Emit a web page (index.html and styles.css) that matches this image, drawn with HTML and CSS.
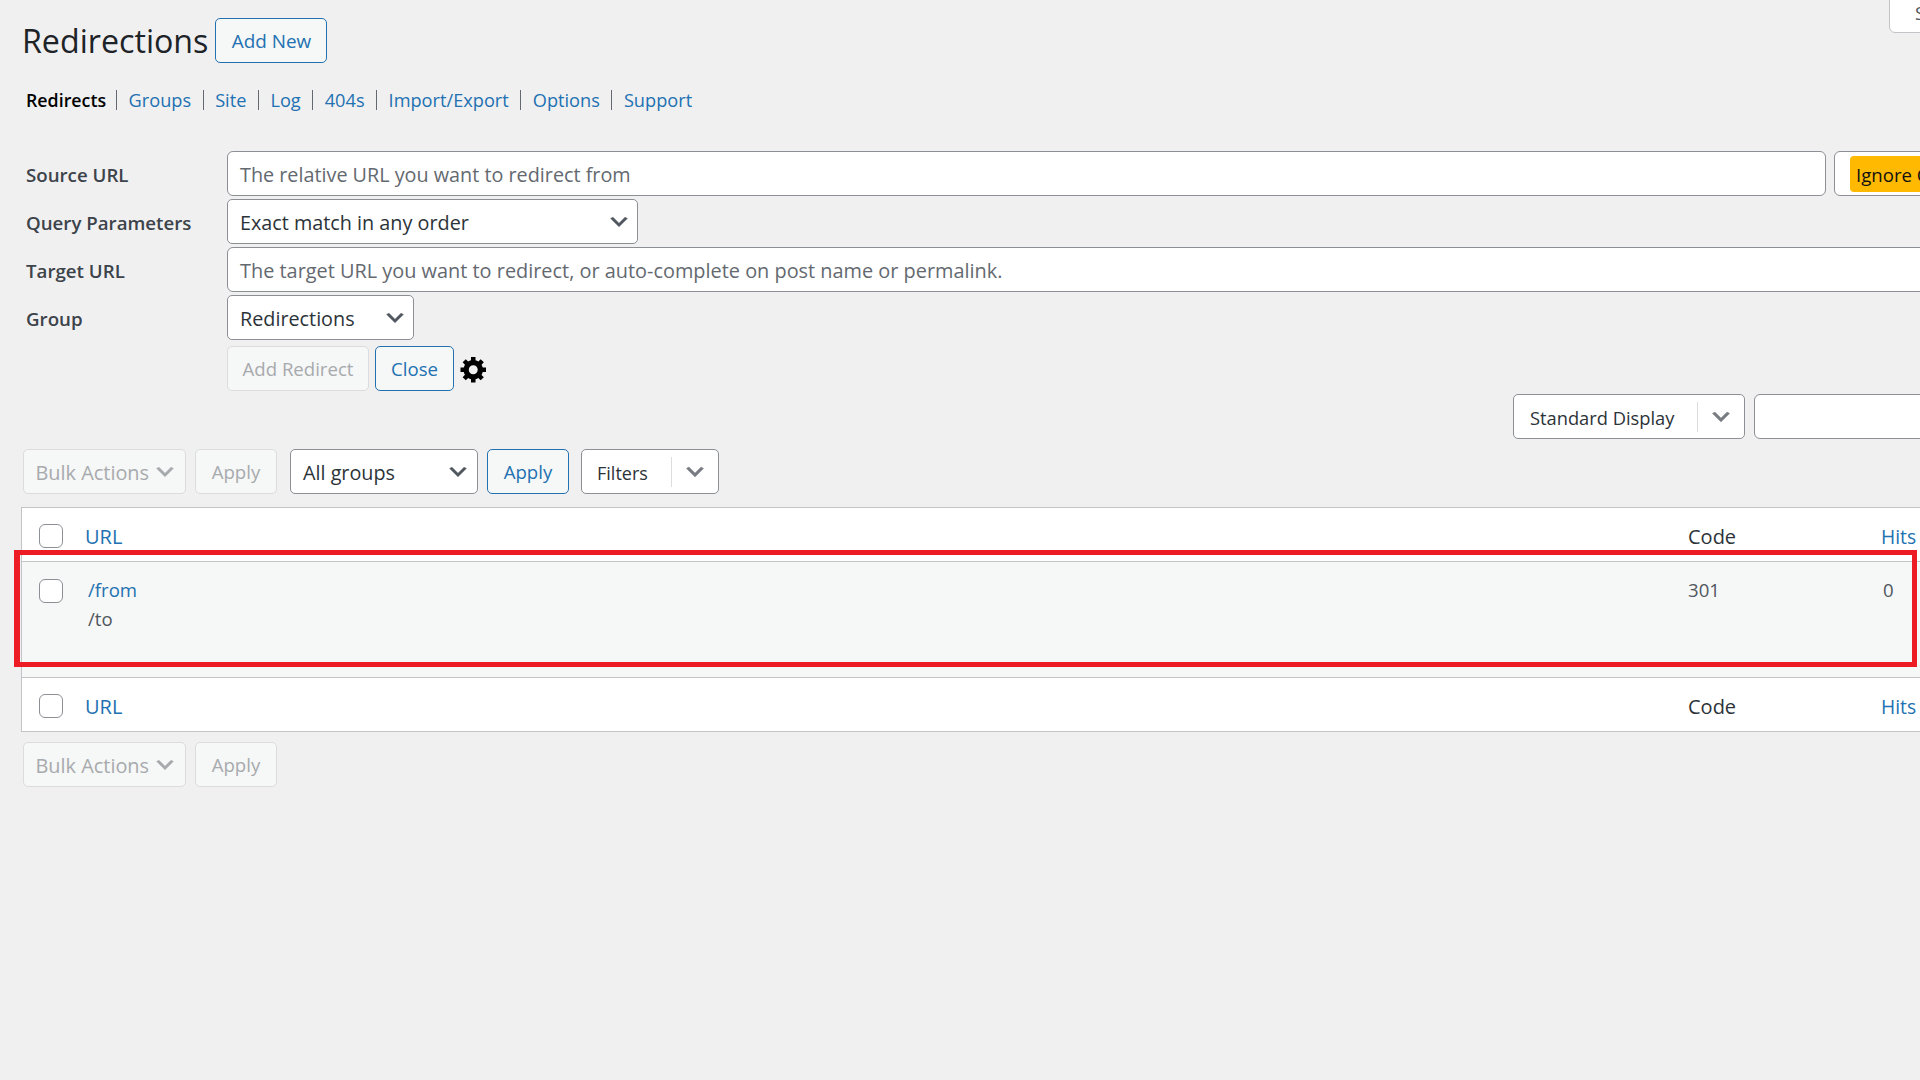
FILE: index.html
```html
<!DOCTYPE html>
<html lang="en">
<head>
<meta charset="utf-8">
<title>Redirections</title>
<link rel="stylesheet" href="styles.css">
</head>
<body>
<svg class="defs" aria-hidden="true"><defs>
<symbol id="chev" viewBox="0 0 20 20"><path d="M5 6l5 5 5-5 2 1-7 7-7-7 2-1z"/></symbol>
<symbol id="gear" viewBox="0 0 20 20"><path d="M18 12h-2.18c-.17.7-.44 1.35-.81 1.93l1.54 1.54-2.1 2.1-1.54-1.54c-.58.36-1.23.63-1.91.79V19H8v-2.18c-.68-.16-1.33-.43-1.91-.79l-1.54 1.54-2.12-2.12 1.54-1.54c-.36-.58-.63-1.23-.79-1.91H1V9.03h2.17c.16-.7.44-1.35.8-1.94L2.43 5.55l2.1-2.1 1.54 1.54c.58-.37 1.24-.64 1.93-.81V2h3v2.18c.68.16 1.33.43 1.91.79l1.54-1.54 2.12 2.12-1.54 1.54c.36.59.64 1.24.8 1.94H18V12zm-8.5 1.5c1.66 0 3-1.34 3-3s-1.34-3-3-3-3 1.34-3 3 1.34 3 3 3z"/></symbol>
</defs></svg>
<div class="screen-tab">Screen Options</div>
<main class="page">
  <header class="head">
    <h1 class="title">Redirections</h1>
    <a class="btn btn-primary add-new">Add New</a>
  </header>
  <nav class="subnav">
    <b class="current">Redirects</b><i class="sep"></i><a class="link">Groups</a><i class="sep"></i><a class="link">Site</a><i class="sep"></i><a class="link">Log</a><i class="sep"></i><a class="link">404s</a><i class="sep"></i><a class="link">Import/Export</a><i class="sep"></i><a class="link">Options</a><i class="sep"></i><a class="link">Support</a>
  </nav>
  <section class="form">
    <label class="label">Source URL</label>
    <div class="source-row">
      <div class="input source-input"><span class="ph">The relative URL you want to redirect from</span></div>
      <div class="input ignore-box"><span class="ignore">Ignore Case</span></div>
    </div>
    <label class="label">Query Parameters</label>
    <div class="select query-select"><span>Exact match in any order</span><svg class="chev"><use href="#chev"/></svg></div>
    <label class="label">Target URL</label>
    <div class="input target-input"><span class="ph">The target URL you want to redirect, or auto-complete on post name or permalink.</span></div>
    <label class="label">Group</label>
    <div class="select group-select"><span>Redirections</span><svg class="chev"><use href="#chev"/></svg></div>
    <div class="actions">
      <a class="btn btn-disabled add-redirect">Add Redirect</a>
      <a class="btn btn-primary close">Close</a>
      <svg class="gear"><use href="#gear"/></svg>
    </div>
  </section>
  <div class="display-row">
    <div class="combo display-combo"><span class="combo-text">Standard Display</span><i class="combo-div"></i><svg class="combo-chev"><use href="#chev"/></svg></div>
    <div class="input search-input"></div>
  </div>
  <div class="tablenav">
    <div class="btn-disabled bulk"><span>Bulk Actions</span><svg class="chev"><use href="#chev"/></svg></div>
    <a class="btn btn-disabled apply">Apply</a>
    <div class="select groups-select"><span>All groups</span><svg class="chev"><use href="#chev"/></svg></div>
    <a class="btn btn-primary apply apply-on">Apply</a>
    <div class="combo filters-combo"><span class="combo-text">Filters</span><i class="combo-div"></i><svg class="combo-chev"><use href="#chev"/></svg></div>
  </div>
  <div class="table">
    <div class="tr th-row">
      <span class="cell-check"><i class="check"></i></span>
      <a class="link cell-url">URL</a>
      <span class="cell-code">Code</span>
      <a class="link cell-hits">Hits</a>
    </div>
    <div class="tr body-row">
      <span class="cell-check"><i class="check"></i></span>
      <div class="cell-url url-stack"><a class="link">/from</a><span class="target">/to</span></div>
      <span class="cell-code muted">301</span>
      <span class="cell-hits zero">0</span>
    </div>
    <div class="tr th-row">
      <span class="cell-check"><i class="check"></i></span>
      <a class="link cell-url">URL</a>
      <span class="cell-code">Code</span>
      <a class="link cell-hits">Hits</a>
    </div>
    <div class="highlight"></div>
  </div>
  <div class="tablenav bottom">
    <div class="btn-disabled bulk"><span>Bulk Actions</span><svg class="chev"><use href="#chev"/></svg></div>
    <a class="btn btn-disabled apply">Apply</a>
  </div>
</main>
</body>
</html>
```
FILE: styles.css
```css
* { box-sizing: border-box; }
html, body { margin: 0; height: 1080px; overflow: hidden; background: #f0f0f1; }
body { position: relative; width: 1920px; font: 18.6px/30px "Open Sans", "Noto Sans", sans-serif; color: #3c434a; }
.defs { position: absolute; width: 0; height: 0; }
.screen-tab { position: absolute; left: 1889px; top: -4px; width: 200px; height: 37px; padding: 0 0 0 25px; line-height: 32px; background: #fff; border: 1px solid #c3c4c7; border-radius: 0 0 0 6px; color: #50575e; white-space: nowrap; }
.page { width: 2100px; padding: 18px 0 0 21px; }
.head { display: flex; align-items: center; height: 45px; }
.title { margin: 0 7px 0 1px; font-size: 32.2px; font-weight: 400; line-height: 45px; color: #1d2327; }
.btn { display: flex; align-items: center; justify-content: center; height: 45px; padding-top: 1px; border: 1px solid; border-radius: 5px; white-space: nowrap; }
.btn-primary { color: #2271b1; border-color: #2271b1; background: #f6f7f7; }
.btn-disabled { color: #a7aaad; border: 1px solid #dcdcde; border-radius: 5px; background: #f6f7f7; }
.add-new { width: 112px; font-size: 18.9px; }
.link { color: #2271b1; }
.subnav { display: flex; align-items: center; height: 30px; margin: 22px 0 0 5px; font-size: 18.2px; white-space: nowrap; }
.current { color: #000; font-weight: 600; font-size: 17.8px; margin-right: -1.5px; }
.sep { width: 1px; height: 20px; margin: 0 11.5px; background: #646970; }
.form { display: grid; grid-template-columns: 206px 1fr; row-gap: 3px; margin-top: 36px; justify-items: start; }
.label { align-self: center; margin-left: 5px; padding-top: 3px; font-weight: 600; font-size: 18.7px; color: #3c434a; white-space: nowrap; }
.input { display: flex; align-items: center; height: 45px; background: #fff; border: 1px solid #8c8f94; border-radius: 6px; padding: 3px 12px 0; font-size: 19.8px; }
.ph { color: #646970; white-space: nowrap; }
.target-input { font-size: 19.9px; }
.source-row { display: flex; gap: 8px; width: 100%; }
.source-input { width: 1599px; }
.ignore-box { flex: 1; padding: 0 15px; font-size: 18.6px; }
.ignore { display: block; width: 200px; height: 36px; line-height: 37px; padding-left: 6px; background: #ffb900; color: #111; border-radius: 4px; white-space: nowrap; }
.select { display: flex; align-items: center; justify-content: space-between; height: 45px; background: #fff; border: 1px solid #8c8f94; border-radius: 5px; padding: 3px 6px 0 12px; font-size: 19.8px; color: #2c3338; white-space: nowrap; }
.chev { width: 24px; height: 24px; margin-top: -2px; fill: #50575e; stroke: #50575e; stroke-width: .4; flex: none; }
.query-select { width: 411px; }
.target-input { width: 100%; }
.group-select { width: 187px; }
.actions { grid-column: 2; display: flex; align-items: center; gap: 7px; margin-top: 3px; }
.add-redirect { width: 142px; }
.close { width: 79px; margin-left: -1px; }
.gear { width: 30px; height: 30px; margin-left: -2px; fill: #000; }
.display-row { display: flex; gap: 9px; margin: 3px 0 0 1492px; }
.combo { display: flex; align-items: center; height: 45px; background: #fff; border: 1px solid #8c8f94; border-radius: 5px; padding: 3px 0 0 15px; font-size: 18.3px; color: #2c3338; white-space: nowrap; }
.combo-div { width: 1px; height: 30px; margin-top: -3px; background: #dcdcde; margin-left: auto; }
.combo-chev { width: 24px; height: 24px; margin: -3px 11px 0 11px; fill: #787c82; stroke: #787c82; stroke-width: .6; flex: none; }
.display-combo { width: 232px; padding-left: 16px; }
.filters-combo { width: 138px; margin-left: 3px; font-size: 18px; }
.search-input { width: 300px; }
.tablenav { display: flex; gap: 9px; margin: 10px 0 0 2px; height: 45px; }
.tablenav.bottom { margin-top: 10px; }
.bulk { display: flex; align-items: center; justify-content: space-between; width: 163px; padding: 2px 8px 0 11.5px; font-size: 19.9px; white-space: nowrap; }
.bulk .chev { fill: #a7aaad; stroke: #a7aaad; }
.apply { width: 82px; }
.groups-select { width: 188px; margin-left: 4px; padding-right: 7px; }
.table { position: relative; width: 2060px; background: #fff; border: 1px solid #c3c4c7; margin-top: 13px; }
.tr { display: grid; grid-template-columns: 63px 1603px 193px 1fr; }
.th-row { height: 53px; align-items: center; font-size: 20px; color: #2c3338; padding-top: 4px; }
.th-row .cell-hits { font-size: 19.3px; }
.body-row { height: 117px; background: #f6f7f7; border-top: 1px solid #c3c4c7; border-bottom: 1px solid #c3c4c7; padding-top: 13px; }
.cell-check { display: flex; padding-left: 17px; }
.check { width: 24px; height: 24px; background: #fff; border: 1px solid #8c8f94; border-radius: 6px; margin-top: 4px; }
.th-row .check { margin-top: -2px; }
.url-stack { display: flex; flex-direction: column; padding-left: 3px; }
.target { color: #50575e; margin-top: -1px; }
.muted { color: #50575e; }
.zero { color: #50575e; padding-left: 2px; }
.highlight { position: absolute; left: -8px; top: 42px; width: 1903px; height: 117px; border: 5px solid #ed1c24; border-left-width: 6px; pointer-events: none; }
```
